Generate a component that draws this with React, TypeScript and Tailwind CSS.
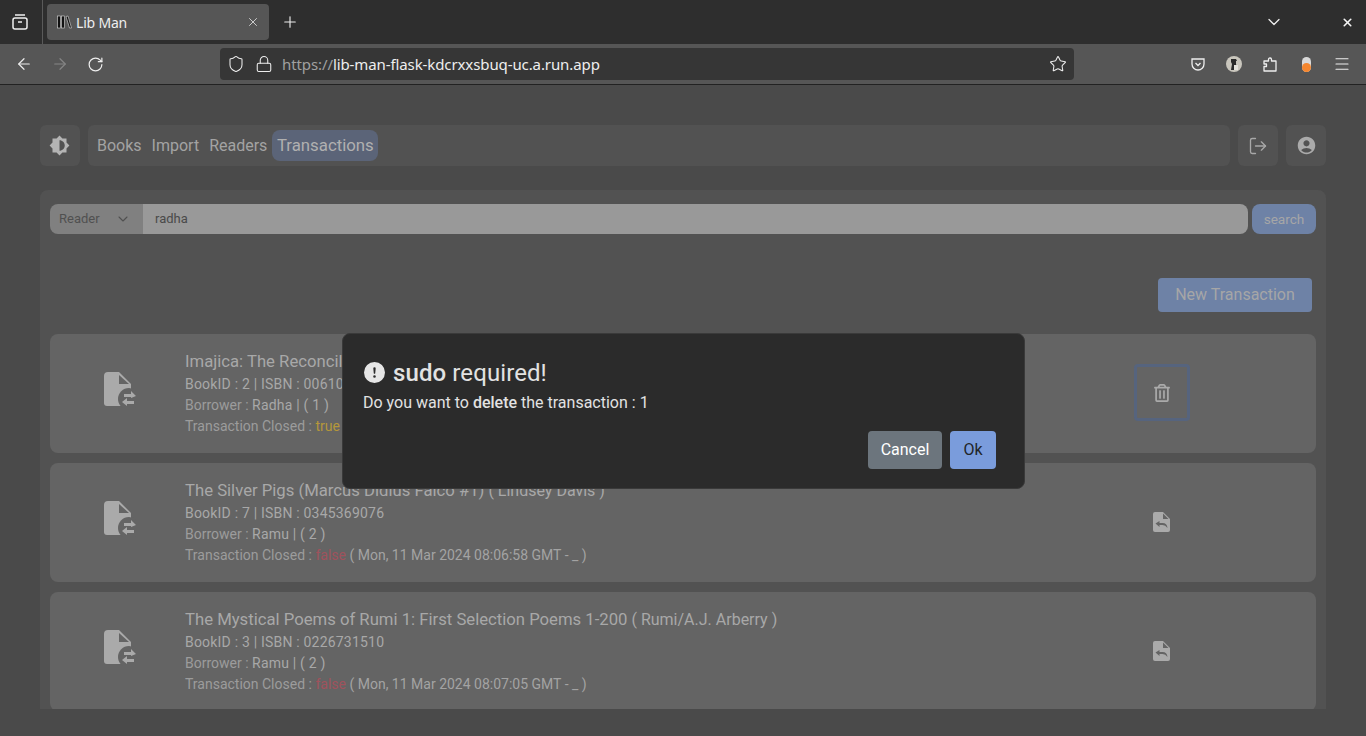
import React from 'react';
import { ArrowLeft, ArrowRight, RotateCw, X, Plus, ChevronDown, Star, Lock, Shield, Menu, LogOut } from 'lucide-react';
import { MdBrightnessMedium, MdAccountCircle } from 'react-icons/md';
import { FaRegTrashAlt } from 'react-icons/fa';
import { BsExclamationCircleFill } from 'react-icons/bs';

const FileSwapIcon = () => (
  <svg width="32" height="36" viewBox="0 0 32 36" className="shrink-0">
    <path d="M4 0H15L27 12V34H3Q0 34 0 31V4Q0 0 4 0Z" fill="#aaaaaa" />
    <path d="M15 3V12H25Z" fill="#646464" />
    <circle cx="25" cy="27" r="11" fill="#646464" />
    <path d="M20 22H27V19L32 24L27 26V25H20Z" fill="#aaaaaa" />
    <path d="M30 29H23V26L18 30L23 34V32H30Z" fill="#aaaaaa" />
  </svg>
);

const FileReturnIcon = () => (
  <svg width="17" height="20" viewBox="0 0 17 20">
    <path d="M2 0H10L17 7V18Q17 20 15 20H2Q0 20 0 18V2Q0 0 2 0Z" fill="#aaaaaa" />
    <path d="M10 1.5V7H15.5Z" fill="#646464" />
    <path d="M2.5 11.5L6.5 9V11H9.5Q14 11 14.5 16Q12.5 13 9.5 13H6.5V15Z" fill="#646464" />
  </svg>
);

const BrowserChrome = () => (
  <div className="shrink-0 text-white font-['Noto_Sans',sans-serif]">
    <div className="h-[44px] bg-[#2e2e2e] flex items-center">
      <div className="w-[40px] flex justify-center">
        <svg width="18" height="18" viewBox="0 0 18 18" fill="none" stroke="#f0f0f0" strokeWidth="1.5">
          <rect x="2" y="5" width="14" height="11" rx="2" />
          <path d="M4 2H14M7 9H11" />
        </svg>
      </div>
      <div className="w-px h-[44px] ml-[2px] bg-[#5a5a5a] mr-[4px]" />
      <div className="w-[222px] h-[36px] bg-[#565656] rounded-[4px] flex items-center px-[10px]">
        <svg width="15" height="14" viewBox="0 0 15 14" fill="#111" stroke="#ddd" strokeWidth="0.6" className="mr-[4px]">
          <rect x="0.5" y="1" width="3" height="12" />
          <rect x="4.5" y="1" width="3" height="12" />
          <path d="M9 1.5L11 1L14.5 13L12.5 13Z" />
        </svg>
        <span className="text-[14px] text-[#eeeeee] tracking-[-0.2px]">Lib Man</span>
        <X size={14} className="ml-auto mr-[-1px] text-[#dddddd]" strokeWidth={1.5} />
      </div>
      <Plus size={18} className="ml-[12px] text-[#eeeeee]" strokeWidth={1.5} />
      <ChevronDown size={20} className="ml-auto text-[#eeeeee]" strokeWidth={1.5} />
      <X size={13} className="ml-[57px] mr-[12px] text-[#f5f5f5]" strokeWidth={3} />
    </div>
    <div className="h-[41px] bg-[#565656] border-b border-[#222222] flex items-center">
      <ArrowLeft size={18} className="ml-[15px] text-[#eeeeee]" strokeWidth={1.6} />
      <ArrowRight size={18} className="ml-[18px] text-[#858585]" strokeWidth={1.6} />
      <RotateCw size={17} className="ml-[18px] text-[#eeeeee]" strokeWidth={1.7} />
      <div className="ml-[116px] w-[854px] h-[32px] bg-[#363636] rounded-[4px] flex items-center">
        <Shield size={18} className="ml-[7px] text-[#eeeeee]" strokeWidth={1.4} />
        <Lock size={18} className="ml-[10px] text-[#eeeeee]" strokeWidth={1.4} />
        <span className="ml-[9px] text-[15px] tracking-[-0.1px] text-[#a0a0a0]">https://<span className="text-[#eeeeee]">lib-man-flask-kdcrxxsbuq-uc.a.run.app</span></span>
        <Star size={18} className="ml-auto mr-[7px] text-[#eeeeee]" strokeWidth={1.4} />
      </div>
      <svg width="14" height="13" viewBox="0 0 14 13" fill="none" stroke="#eeeeee" strokeWidth="1.3" className="ml-[117px]">
        <path d="M1 1H13V6A6 6 0 0 1 1 6Z" />
        <path d="M4.5 5L7 7.5L9.5 5" />
      </svg>
      <svg width="16" height="16" viewBox="0 0 16 16" className="ml-[21px]">
        <circle cx="8" cy="8" r="8" fill="#c9c6bd" />
        <path d="M5 3H10L11 5H10V8L12 14H5L6 8L5 6Z" fill="#2a2a2a" />
        <path d="M8 9H12V14H8Z" fill="#e4e2dc" />
      </svg>
      <svg width="14" height="15" viewBox="0 0 14 15" fill="none" stroke="#eeeeee" strokeWidth="1.3" strokeLinejoin="round" className="ml-[21px]">
        <path d="M1 14V9.5H3.5V7H1V4H5.5V2.5Q5.5 1 7 1Q8.5 1 8.5 2.5V4H13V14Z" />
      </svg>
      <div className="ml-[25px] w-[9px] h-[15px] rounded-full bg-[#d9d9d9] flex items-end">
        <div className="w-[9px] h-[9px] rounded-full bg-[#f5862e]" />
      </div>
      <Menu size={18} className="ml-[22px] text-[#eeeeee]" strokeWidth={1.5} />
    </div>
  </div>
);

type Row = {
  title: string;
  author: string;
  bookId: string;
  isbn: string;
  borrower: string;
  readerId: string;
  closed: boolean;
  date: string;
};

const rows: Row[] = [
  { title: 'Imajica: The Reconciliation', author: 'Clive Barker', bookId: '2', isbn: '0061093629', borrower: 'Radha', readerId: '1', closed: true, date: 'Mon, 11 Mar 2024 08:06:20 GMT' },
  { title: 'The Silver Pigs (Marcus Didius Falco #1)', author: 'Lindsey Davis', bookId: '7', isbn: '0345369076', borrower: 'Ramu', readerId: '2', closed: false, date: 'Mon, 11 Mar 2024 08:06:58 GMT' },
  { title: 'The Mystical Poems of Rumi 1: First Selection Poems 1-200', author: 'Rumi/A.J. Arberry', bookId: '3', isbn: '0226731510', borrower: 'Ramu', readerId: '2', closed: false, date: 'Mon, 11 Mar 2024 08:07:05 GMT' },
];

const TransactionCard = ({ row }: { row: Row }) => (
  <div className="h-[119px] shrink-0 bg-[#646464] rounded-[8px] flex items-center">
    <div className="w-[135px] pl-[54px] mb-[7px]">
      <FileSwapIcon />
    </div>
    <div className="text-[14px] leading-[21px] text-[#9c9c9c]">
      <div className="text-[16px] leading-[24px] text-[#a8a8a8]">
        <span className="text-[16.7px]">{row.title}</span> ( {row.author} )
      </div>
      <div className="text-[#a8a8a8] tracking-[0.2px]">BookID : {row.bookId} | ISBN : {row.isbn}</div>
      <div>Borrower : <span className="text-[#a8a8a8] tracking-[0.2px]">{row.borrower} | ( {row.readerId} )</span></div>
      <div>
        Transaction Closed :{' '}
        <span className={row.closed ? 'text-[#b5973a]' : 'text-[#a0525c]'}>{row.closed ? 'true' : 'false'}</span>{' '}
        <span className="text-[#a3a3a3]">( {row.date} - _ )</span>
      </div>
    </div>
    <div className="ml-auto mr-[126px] w-[56px] h-[57px] mb-[2px] flex items-center justify-center">
      {row.closed ? (
        <div className="w-[56px] h-[57px] rounded-[4px] border-[3px] border-[#56647e] flex items-center justify-center text-[#aaaaaa]">
          <FaRegTrashAlt size={18} className="-ml-[1px]" />
        </div>
      ) : (
        <div className="-ml-[1px] flex">
          <FileReturnIcon />
        </div>
      )}
    </div>
  </div>
);

const SudoDialog = () => (
  <div className="absolute left-[342px] top-[333px] w-[683px] h-[156px] z-10 bg-[#2b2b2b] border border-[#3a3a3a] rounded-[8px] pl-[20px] pr-[28px] pt-[20px] flex flex-col text-[#e2e2e2]">
    <div className="flex items-center gap-[8px] h-[36px]">
      <BsExclamationCircleFill size={21} className="text-[#e6e6e6] ml-[1px]" />
      <div className="text-[24px] leading-[36px] mt-[1px] tracking-[0.1px]"><span className="font-medium">sudo</span> required!</div>
    </div>
    <div className="text-[16px] leading-[24px] mt-[1px]">Do you want to <span className="font-medium">delete</span> the transaction : 1</div>
    <div className="flex justify-end gap-[8px] mt-[16px]">
      <button className="w-[74px] h-[38px] bg-[#6c757d] rounded-[4px] text-[16px] text-white">Cancel</button>
      <button className="w-[46px] h-[38px] bg-[#7a9cdc] rounded-[4px] text-[16px] text-[#212529]">Ok</button>
    </div>
  </div>
);

export default function App() {
  return (
    <div className="relative h-[736px] overflow-hidden flex flex-col bg-[#4a4a4a] font-['Roboto',sans-serif]">
      <BrowserChrome />
      <div className="flex-1 min-h-0 px-[40px] pt-[40px] flex flex-col">
        <div className="flex gap-[8px] h-[41px] shrink-0 text-[#a3a3a3]">
          <div className="w-[40px] bg-[#525252] rounded-[6px] flex items-center justify-center">
            <MdBrightnessMedium size={21} className="text-[#b4b4b4] -ml-[1px]" />
          </div>
          <div className="flex-1 bg-[#525252] rounded-[6px] flex items-center px-[5px] gap-[2px] text-[16px]">
            <a className="px-[4px]">Books</a>
            <a className="px-[4px]">Import</a>
            <a className="pl-[4px] pr-[2px]">Readers</a>
            <a className="ml-[1px] w-[106px] h-[31px] flex items-center justify-center rounded-[8px] bg-[#5b6478] text-[#b0b0b0] text-[16.8px]">Transactions</a>
          </div>
          <div className="w-[40px] bg-[#525252] rounded-[6px] flex items-center justify-center">
            <LogOut size={20} strokeWidth={1.6} className="text-[#a8a8a8]" />
          </div>
          <div className="w-[40px] bg-[#525252] rounded-[6px] flex items-center justify-center">
            <MdAccountCircle size={21} className="text-[#aaaaaa]" />
          </div>
        </div>

        <div className="mt-[24px] h-[519px] shrink-0 overflow-hidden rounded-t-[8px] bg-[#525252] px-[10px] pt-[14px]">
          <div className="flex h-[30px] text-[13px]">
            <div className="w-[93px] bg-[#808080] rounded-l-[8px] flex items-center pl-[9px] text-[#505050]">
              Reader
              <ChevronDown size={16} className="ml-auto mr-[12px]" strokeWidth={1.6} />
            </div>
            <div className="flex-1 bg-[#999999] rounded-r-[8px] flex items-center pl-[12px] text-[#4a4a4a]">radha</div>
            <button className="ml-[4px] w-[64px] bg-[#6e82a6] rounded-[8px] text-[13.6px] text-[#a6a6a6]">search</button>
          </div>
          <div className="flex justify-end pr-[4px] mt-[44px]">
            <button className="w-[154px] h-[34px] bg-[#6e82a6] rounded-[4px] text-[16px] text-[#a6a6a6]">New Transaction</button>
          </div>
          <div className="mt-[22px] flex flex-col gap-[10px]">
            {rows.map((row) => (
              <TransactionCard key={row.bookId} row={row} />
            ))}
          </div>
        </div>
      </div>
      <SudoDialog />
    </div>
  );
}
